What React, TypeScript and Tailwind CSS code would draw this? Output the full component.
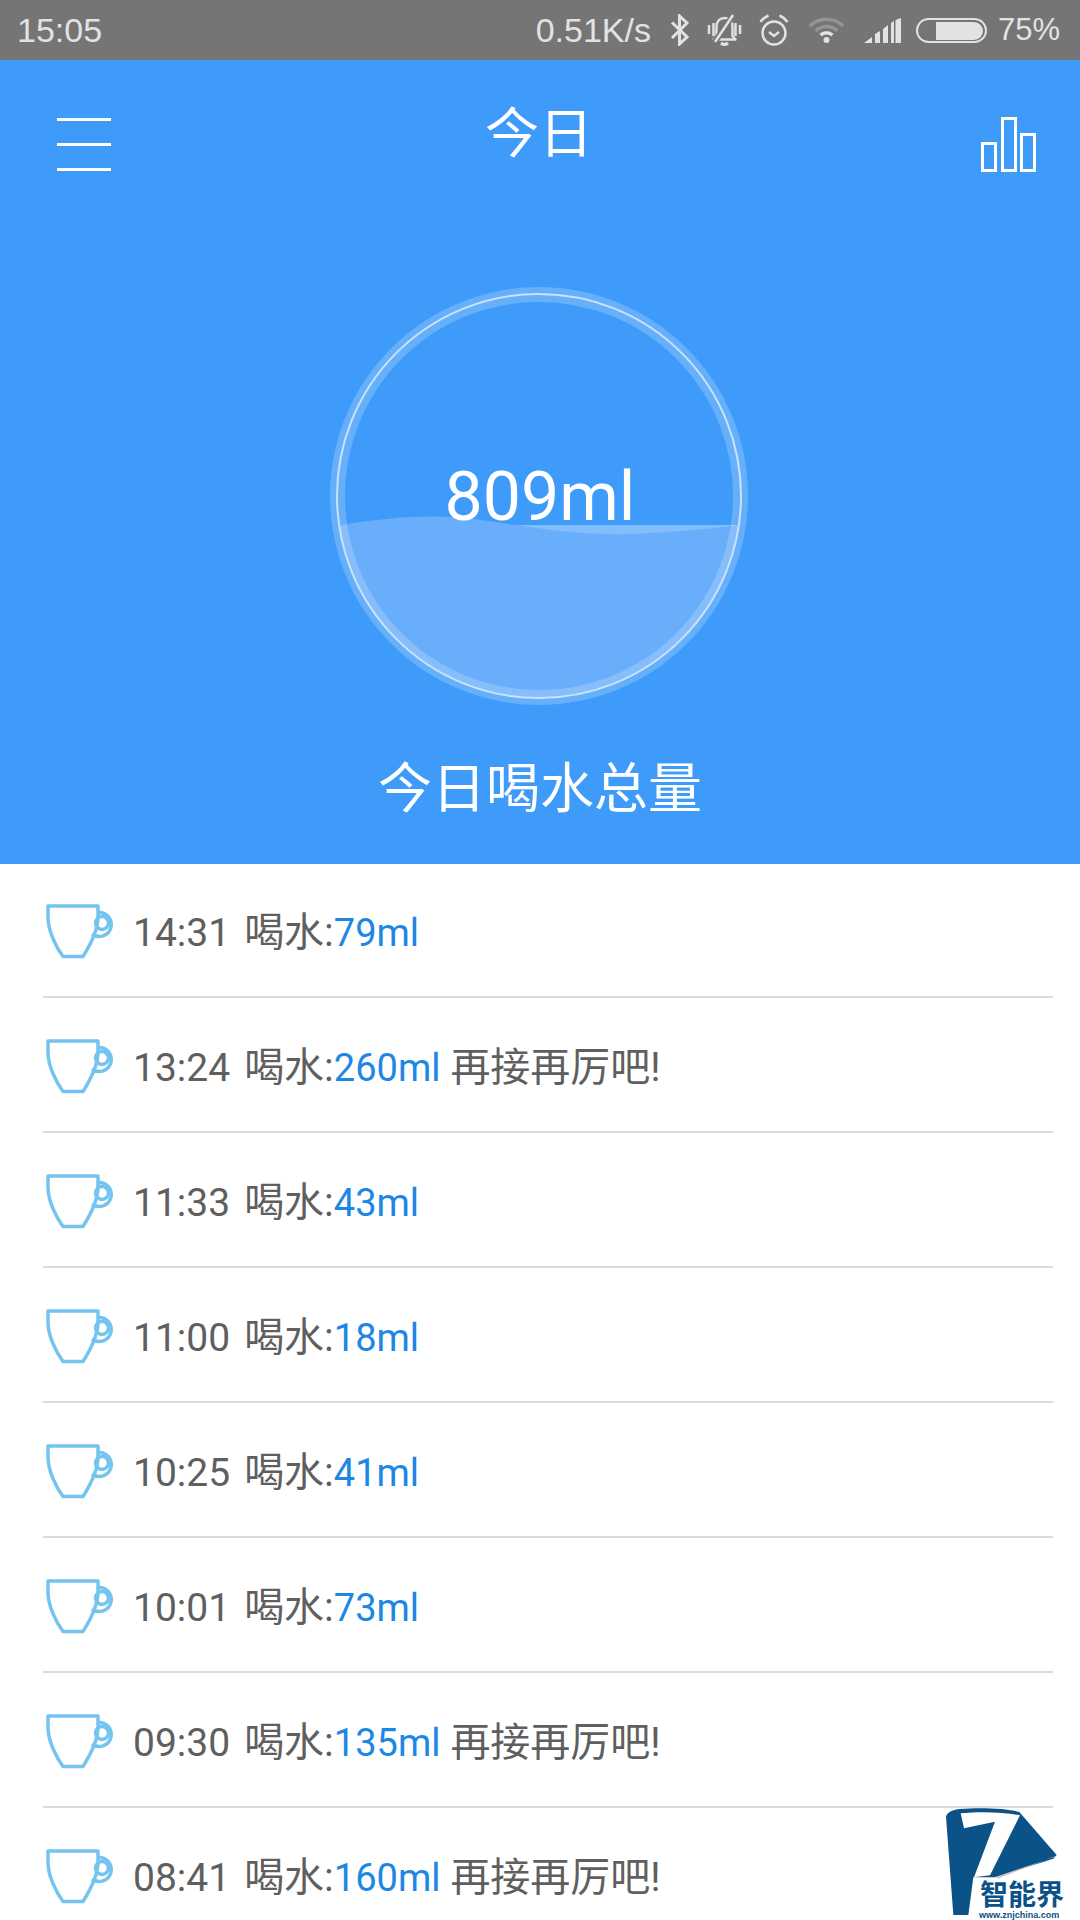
const records = [
  { time: '14:31', amount: '79ml', cheer: false },
  { time: '13:24', amount: '260ml', cheer: true },
  { time: '11:33', amount: '43ml', cheer: false },
  { time: '11:00', amount: '18ml', cheer: false },
  { time: '10:25', amount: '41ml', cheer: false },
  { time: '10:01', amount: '73ml', cheer: false },
  { time: '09:30', amount: '135ml', cheer: true },
  { time: '08:41', amount: '160ml', cheer: true },
];

function CupIcon() {
  return (
    <svg width="72" height="56" viewBox="0 0 72 56" fill="none" stroke="#74c4ef" strokeWidth="3.5" className="shrink-0 mt-[3px]">
      <path d="M3 3H53V14C53 28 44 44 38 53.5H18C11 44 3 28 3 14Z" strokeLinejoin="round" />
      <path d="M53 9.5A12 12 0 1 1 47 31" />
      <circle cx="57" cy="20" r="6.5" />
    </svg>
  );
}

function StatusBar() {
  return (
    <div className="h-[60px] bg-[#757575] flex items-center justify-between pl-[17px] pr-[20px] text-[34px] text-[#e2e2e2] font-['Liberation_Sans',sans-serif]">
      <span>15:05</span>
      <div className="flex items-center">
        <span>0.51K/s</span>
        <svg width="19" height="32" viewBox="0 0 19 32" fill="none" stroke="#e2e2e2" strokeWidth="3" className="ml-[19px]">
          <path d="M2 8.5L17 23L9.5 30V2L17 9L2 24" />
        </svg>
        <svg width="35" height="32" viewBox="0 0 35 32" fill="none" stroke="#e2e2e2" strokeWidth="2.5" className="ml-[18px]">
          <path d="M2 11V20M6.5 9V22M28.5 9V22M33 11V20" />
          <path d="M9.5 22V13C9.5 7 13 4 17.5 4C22 4 25.5 7 25.5 13V22L28.5 25.5H6.5Z" strokeLinejoin="round" />
          <path d="M14 29Q17.5 32 21 29" strokeWidth="3" />
          <path d="M7 29L27 0" stroke="#757575" strokeWidth="6" />
          <path d="M8 28L26 1" />
        </svg>
        <svg width="30" height="32" viewBox="0 0 30 32" fill="none" stroke="#e2e2e2" strokeWidth="2.5" className="ml-[17px]">
          <circle cx="15" cy="19" r="11.5" />
          <path d="M10 18L15 22L20 18" />
          <path d="M1.5 8C3.5 5 6 3 9.5 1.5M28.5 8C26.5 5 24 3 20.5 1.5" />
        </svg>
        <svg width="37" height="26" viewBox="0 0 37 26" fill="none" className="ml-[19px]">
          <path d="M2 9C11 0 26 0 35 9" stroke="#949494" strokeWidth="3.5" />
          <path d="M7.5 14C14 8 23 8 29.5 14" stroke="#949494" strokeWidth="3.5" />
          <path d="M12.5 18C16 15 21 15 24.5 18" stroke="#e2e2e2" strokeWidth="3.5" />
          <circle cx="18.5" cy="23" r="3" fill="#e2e2e2" />
        </svg>
        <svg width="37" height="25" viewBox="0 0 37 25" fill="#e2e2e2" className="ml-[19px]">
          <path d="M0 25L8 19V25ZM11 16L16 13V25H11ZM19 11L24 7V25H19ZM27 5L30 3V25H27ZM31.5 2L37 0V25H31.5Z" />
        </svg>
        <svg width="71" height="25" viewBox="0 0 71 25" fill="none" className="ml-[15px]">
          <rect x="1" y="1" width="69" height="23" rx="11.5" stroke="#e2e2e2" strokeWidth="2" />
          <path d="M20 4H58A8.5 8.5 0 0 1 58 22H20Z" fill="#e2e2e2" />
        </svg>
        <span className="ml-[11px] text-[31px]">75%</span>
      </div>
    </div>
  );
}

function WaterCircle() {
  return (
    <div className="relative w-[420px] h-[420px] mt-[78px] ml-[329px]">
      <svg width="420" height="420" viewBox="0 0 420 420" fill="none">
        <defs>
          <clipPath id="inner">
            <circle cx="210" cy="210" r="202" />
          </clipPath>
        </defs>
        <g clipPath="url(#inner)">
          <path d="M0 239H420V420H0Z" fill="#84bdfb" />
          <path d="M0 241C50 232 100 228 135 232C180 236 230 250 300 248C340 247 380 243 420 238V420H0Z" fill="#68aefa" />
        </g>
        <circle cx="210" cy="210" r="201.5" stroke="white" strokeOpacity="0.2" strokeWidth="15" />
        <circle cx="210" cy="210" r="202" stroke="#c9e3fd" strokeWidth="2" />
      </svg>
      <span className="absolute inset-x-0 top-[171px] pl-[2px] text-center text-[68px] leading-[80px] text-white">809ml</span>
    </div>
  );
}

export default function App() {
  return (
    <div className="w-[1080px] h-[1920px] relative overflow-hidden bg-white font-[Roboto,'Noto_Sans_CJK_SC',sans-serif]">
      <StatusBar />

      {/* Header */}
      <div className="h-[804px] bg-[#3f9bfa]">
        <div className="h-[148px] flex items-center justify-between pl-[57px] pr-[44px]">
          <div className="w-[54px] flex flex-col gap-[22px] mt-[20px]">
            <div className="h-[3px] bg-white" />
            <div className="h-[3px] bg-white" />
            <div className="h-[3px] bg-white" />
          </div>
          <span className="text-[54px] leading-[60px] text-white -ml-[14px] mt-[2px]">今日</span>
          <svg width="55" height="55" viewBox="0 0 55 55" fill="none" stroke="white" strokeWidth="3" className="mt-[20px]">
            <rect x="1.5" y="26.5" width="13" height="27" />
            <rect x="21.5" y="1.5" width="13" height="52" />
            <rect x="40.5" y="17.5" width="13" height="36" />
          </svg>
        </div>
        <WaterCircle />
        <div className="mt-[54px] text-center text-[54px] leading-[60px] text-white">今日喝水总量</div>
      </div>

      {/* Records */}
      <div className="mx-[43px] w-[1010px] -mt-[1px]">
        {records.map((r) => (
          <div key={r.time} className="h-[135px] border-b-2 border-[#d9dcdf] flex items-center gap-[16px] pl-[2px] pb-[1px]">
            <CupIcon />
            <div className="text-[38px] text-[#5f5f5f] whitespace-pre mt-[7px]">
              <span className="text-[39px]">{r.time}</span>
              <span className="text-[40px] ml-[14px]">喝水:</span>
              <span className="text-[#1d87e4]">{r.amount}</span>
              {r.cheer && <span className="text-[40px]"> 再接再厉吧!</span>}
            </div>
          </div>
        ))}
      </div>

      {/* Watermark logo */}
      <div className="absolute left-[940px] top-[1800px] w-[140px] h-[120px]">
        <svg width="140" height="120" viewBox="0 0 420 360">
          <path d="M18 50C22 36 40 29 60 27C120 22 200 25 238 36L350 165L340 176L165 232L100 232L85 345H40Z" fill="#0b5288" />
          <path d="M62 40C120 34 190 36 240 46L150 226L102 232L165 65L72 85Z" fill="#ffffff" />
          <path d="M352 166L172 236L170 230L345 170Z" fill="#c4c8cc" />
        </svg>
        <span className="absolute left-[40px] top-[77px] text-[28px] leading-[32px] font-bold text-[#0b5288] whitespace-nowrap font-['Noto_Sans_CJK_SC',sans-serif]">智能界</span>
        <span className="absolute left-[39px] top-[110px] text-[9px] leading-[10px] font-bold text-[#0b5288] whitespace-nowrap font-['Liberation_Sans',sans-serif]">www.znjchina.com</span>
      </div>
    </div>
  );
}
